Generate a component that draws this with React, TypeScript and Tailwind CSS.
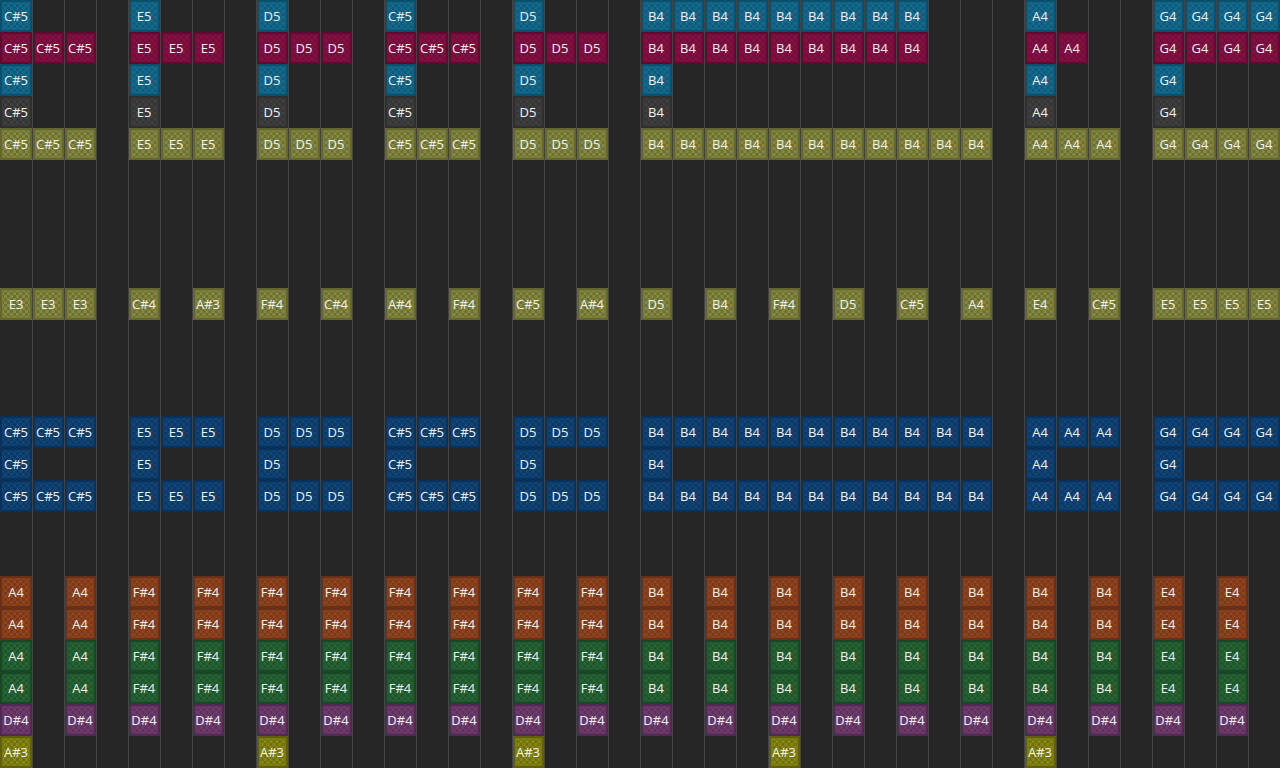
import React from "react";

type Note = [number, string];
const rep = (cols: number[], n: string): Note[] => cols.map((c) => [c, n]);
const range = (a: number, b: number) => Array.from({ length: b - a + 1 }, (_, i) => a + i);

const phrase = (a: number[][]): Note[] => {
  const names = ["C#5", "E5", "D5", "C#5", "D5", "B4", "A4", "G4"];
  return a.flatMap((cols, i) => rep(cols, names[i]));
};
const single = phrase([[0], [4], [8], [12], [16], [20], [32], [36]]);
const full = phrase([range(0, 2), range(4, 6), range(8, 10), range(12, 14), range(16, 18), range(20, 30), range(32, 34), range(36, 39)]);
const second = phrase([[0], [4], [8], [12], [16], range(20, 28), [32], range(36, 39)]);
const magenta = phrase([range(0, 2), range(4, 6), range(8, 10), range(12, 14), range(16, 18), range(20, 28), [32, 33], range(36, 39)]);
const melody: Note[] = [
  [0, "E3"], [1, "E3"], [2, "E3"], [4, "C#4"], [6, "A#3"], [8, "F#4"], [10, "C#4"], [12, "A#4"], [14, "F#4"], [16, "C#5"], [18, "A#4"], [20, "D5"], [22, "B4"], [24, "F#4"], [26, "D5"], [28, "C#5"], [30, "A4"], [32, "E4"], [34, "C#5"], [36, "E5"], [37, "E5"], [38, "E5"], [39, "E5"],
];
const chord = (a: string, f: string, b: string, e: string): Note[] => [
  ...rep([0, 2], a), ...rep([4, 6, 8, 10, 12, 14, 16, 18], f), ...rep([20, 22, 24, 26, 28, 30, 32, 34], b), ...rep([36, 38], e),
];
const dSharp = rep([0, 2, 4, 6, 8, 10, 12, 14, 16, 18, 20, 22, 24, 26, 28, 30, 32, 34, 36, 38], "D#4");
const aSharp = rep([0, 8, 16, 24, 32], "A#3");

const teal = "border-[#0c4f6a] shadow-[inset_0_0_0_1px_#106384] bg-[conic-gradient(#156c90_25%,#0e5a79_0_50%,#156c90_0_75%,#0e5a79_0)]";
const crimson = "border-[#5e0b2f] shadow-[inset_0_0_0_1px_#7a0e3b] bg-[conic-gradient(#860f43_25%,#700d38_0_50%,#860f43_0_75%,#700d38_0)]";
const gray = "border-[#2f2f2f] shadow-[inset_0_0_0_1px_#3a3a3a] bg-[conic-gradient(#404040_25%,#343434_0_50%,#404040_0_75%,#343434_0)]";
const olive = "border-[#63662f] shadow-[inset_0_0_0_1px_#7a7d39] bg-[conic-gradient(#868a40_25%,#6c6f32_0_50%,#868a40_0_75%,#6c6f32_0)]";
const blue = "border-[#0b3159] shadow-[inset_0_0_0_1px_#0e3f6e] bg-[conic-gradient(#104679_25%,#0c3864_0_50%,#104679_0_75%,#0c3864_0)]";
const rust = "border-[#683016] shadow-[inset_0_0_0_1px_#863f1d] bg-[conic-gradient(#92441e_25%,#783919_0_50%,#92441e_0_75%,#783919_0)]";
const green = "border-[#194624] shadow-[inset_0_0_0_1px_#225a2e] bg-[conic-gradient(#266634_25%,#1f532a_0_50%,#266634_0_75%,#1f532a_0)]";
const purple = "border-[#512951] shadow-[inset_0_0_0_1px_#683666] bg-[conic-gradient(#713c6f_25%,#5d315c_0_50%,#713c6f_0_75%,#5d315c_0)]";
const yellow = "border-[#60600a] shadow-[inset_0_0_0_1px_#7a7a0d] bg-[conic-gradient(#888810_25%,#70700c_0_50%,#888810_0_75%,#70700c_0)]";

const rows: { notes: Note[]; color: string }[] = [
  { notes: second, color: teal },
  { notes: magenta, color: crimson },
  { notes: single, color: teal },
  { notes: single, color: gray },
  { notes: full, color: olive },
  { notes: [], color: "" },
  { notes: [], color: "" },
  { notes: [], color: "" },
  { notes: [], color: "" },
  { notes: melody, color: olive },
  { notes: [], color: "" },
  { notes: [], color: "" },
  { notes: [], color: "" },
  { notes: full, color: blue },
  { notes: single, color: blue },
  { notes: full, color: blue },
  { notes: [], color: "" },
  { notes: [], color: "" },
  { notes: chord("A4", "F#4", "B4", "E4"), color: rust },
  { notes: chord("A4", "F#4", "B4", "E4"), color: rust },
  { notes: chord("A4", "F#4", "B4", "E4"), color: green },
  { notes: chord("A4", "F#4", "B4", "E4"), color: green },
  { notes: dSharp, color: purple },
  { notes: aSharp, color: yellow },
];

export default function App() {
  return (
    <div className="w-[1280px] h-[768px] overflow-hidden bg-[#262626] font-['Open_Sans','Noto_Sans',sans-serif]">
      {rows.map((row, r) => {
        const map = new Map(row.notes);
        return (
          <div key={r} className="flex h-8">
            {range(0, 39).map((c) => {
              const label = map.get(c);
              return (
                <div key={c} className="w-8 h-8 shrink-0 border-l border-[#444444] first:border-l-0">
                  {label && (
                    <div
                      className={`w-full h-8 border-2 bg-[size:6px_6px] bg-center flex items-center justify-center pt-[1px] text-[13px] leading-none font-medium text-[#f2f2f2] ${c > 0 ? "pr-px" : ""} ${row.color}`}
                    >
                      {label}
                    </div>
                  )}
                </div>
              );
            })}
          </div>
        );
      })}
    </div>
  );
}
